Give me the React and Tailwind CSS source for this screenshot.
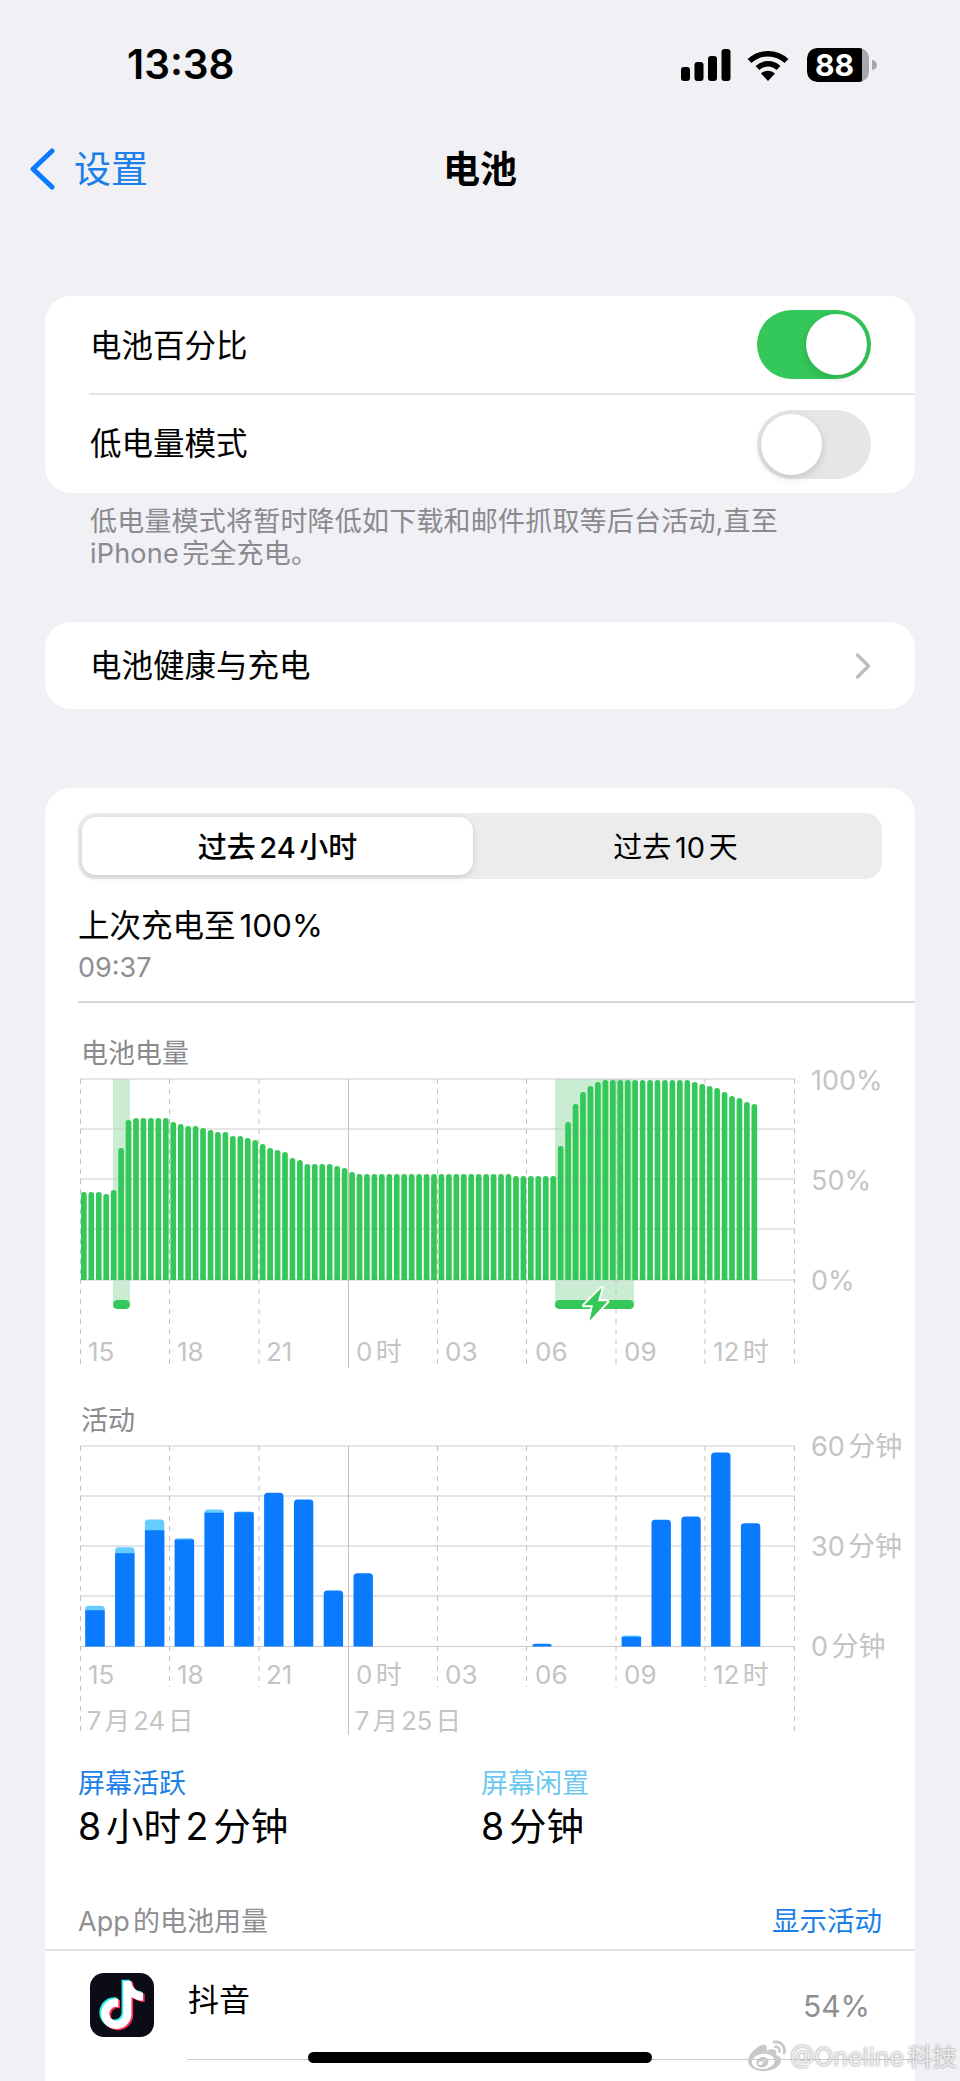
import { ChevronRight } from "lucide-react";
import { FaWeibo } from "react-icons/fa";

// hourly battery level, in px above the baseline (200px = 100%)
const batteryLevels = [
  88, 88, 88, 86, 90, 132, 160, 162, 162, 162, 162, 162, 158, 156, 154, 154, 152, 150, 148, 148,
  144, 144, 142, 140, 136, 132, 130, 128, 122, 120, 116, 116, 116, 116, 114, 112, 108, 106,
  ...Array(20).fill(106), ...Array(6).fill(104),
  134, 158, 176, 188, 194, 198, ...Array(12).fill(200),
  198, 196, 194, 192, 188, 184, 182, 178, 176,
];

// [slot, screen on, screen on + idle]
const activityBars = [
  [0, 36.3, 40.7], [1, 93.3, 99.3], [2, 116.3, 127], [3, 107, 108.3], [4, 133.7, 137],
  [5, 134.3, 135], [6, 153.7], [7, 147], [8, 56], [9, 73.3], [15, 2.7], [18, 9.7, 11],
  [19, 126.7], [20, 130], [21, 194], [22, 123.3],
];

const tiktokPath = "M448,209.91a210.06,210.06,0,0,1-122.77-39.25V349.38A162.55,162.55,0,1,1,185,188.31V278.2a74.62,74.62,0,1,0,52.23,71.18V0l88,0a121.18,121.18,0,0,0,1.86,22.17h0A122.18,122.18,0,0,0,381,102.39a121.43,121.43,0,0,0,67,20.14Z";

const hourTicks = [
  [8, "15"], [97, "18"], [186, "21"], [276, "0时"], [365, "03"], [455, "06"], [544, "09"], [633, "12时"],
];
const tickX = [0.5, 89.5, 179, 268.5, 357.5, 446.5, 536, 625, 714.5];

function topRounded(x, w, bottom, h, r) {
  const rr = Math.min(r, h);
  return `M${x} ${bottom}V${bottom - h + rr}A${rr} ${rr} 0 0 1 ${x + rr} ${bottom - h}H${x + w - rr}A${rr} ${rr} 0 0 1 ${x + w} ${bottom - h + rr}V${bottom}Z`;
}

function ChartGrid({ rows, dashEnd, solidEnd, edgeEnd = dashEnd }) {
  return (
    <g>
      {rows.map((y) => (
        <line key={y} x1="0" x2="715" y1={y} y2={y} stroke="#cbcbcd" strokeWidth="1.2" />
      ))}
      {tickX.map((x, i) => {
        const solid = i === 3;
        const edge = i === 0 || i === tickX.length - 1;
        return (
          <line key={x} x1={x} x2={x} y1="0" y2={solid ? solidEnd : edge ? edgeEnd : dashEnd}
            stroke="#c0c0c2" strokeWidth="1" strokeDasharray={solid ? undefined : "5 5"} />
        );
      })}
    </g>
  );
}

function BatteryChart() {
  return (
    <svg width="835" height="291" className="block overflow-visible ml-[35px] mt-[5px]">
      <rect x="33" y="0" width="17" height="229" fill="#c9ecd3" />
      <rect x="475" y="0" width="79" height="229" fill="#c9ecd3" />
      <ChartGrid rows={[0, 50, 100, 150, 201]} dashEnd={286} solidEnd={289} />
      {batteryLevels.map((h, i) => (
        <path key={i} d={topRounded(1 + 7.45 * i, 5.7, 201, h, 2.8)} fill="#34c759" />
      ))}
      <rect x="33" y="221" width="17" height="9" rx="4.5" fill="#34c759" />
      <rect x="475" y="221" width="79" height="9" rx="4.5" fill="#34c759" />
      <path d="M521.7 208.7L504 226.3H513L509.5 242L527.5 222.3H518Z" fill="#34c759" stroke="#fff"
        strokeWidth="4" strokeLinejoin="round" paintOrder="stroke" />
      {hourTicks.map(([x, label]) => (
        <text key={label} x={x} y="281.5" fill="#c4c4c6" className="text-[26px]">{label}</text>
      ))}
      <text x="731" y="10.5" fill="#c4c4c6" className="text-[27px]">100%</text>
      <text x="731" y="110.5" fill="#c4c4c6" className="text-[27px]">50%</text>
      <text x="731" y="210.5" fill="#c4c4c6" className="text-[27px]">0%</text>
    </svg>
  );
}

function ActivityChart() {
  return (
    <svg width="835" height="290" className="block overflow-visible ml-[35px] mt-[5px]">
      <ChartGrid rows={[0, 50, 100, 150, 200.5]} dashEnd={241} solidEnd={289} edgeEnd={285} />
      {activityBars.map(([slot, screen, total]) => {
        const x = 5.3 + 29.8 * slot;
        return (
          <g key={slot}>
            {total && <path d={topRounded(x, 19.4, 200.5, total, 3.5)} fill="#66ccff" />}
            <path d={topRounded(x, 19.4, 200.5, screen, total ? 0.5 : 3.5)} fill="#0a7aff" />
          </g>
        );
      })}
      {hourTicks.map(([x, label]) => (
        <text key={label} x={x} y="238" fill="#c4c4c6" className="text-[26px]">{label}</text>
      ))}
      <text x="7" y="284" fill="#c4c4c6" className="text-[25.5px]">7月24日</text>
      <text x="275" y="284" fill="#c4c4c6" className="text-[25.5px]">7月25日</text>
      <text x="731" y="10" fill="#c4c4c6" className="text-[27px]">60分钟</text>
      <text x="731" y="110" fill="#c4c4c6" className="text-[27px]">30分钟</text>
      <text x="731" y="210" fill="#c4c4c6" className="text-[27px]">0分钟</text>
    </svg>
  );
}

function Toggle({ on }) {
  return (
    <div className={`w-[114px] h-[69px] rounded-full p-[4px] flex ${on ? "bg-[#34c759] justify-end" : "bg-[#e6e6e8] justify-start"}`}>
      <div className="w-[61px] h-[61px] rounded-full bg-white shadow-[0_3px_8px_rgba(0,0,0,0.15)]" />
    </div>
  );
}

function StatusBar() {
  return (
    <div className="h-[130px] flex items-center justify-between pl-[127px] pr-[83px]">
      <span className="text-[40.5px] font-semibold text-black leading-none">13:38</span>
      <div className="flex items-center">
        <svg width="50" height="32" viewBox="0 0 50 32" className="block">
          <rect x="0" y="18" width="9" height="14" rx="3" fill="#000" />
          <rect x="13.5" y="13" width="9" height="19" rx="3" fill="#000" />
          <rect x="27" y="7" width="9" height="25" rx="3" fill="#000" />
          <rect x="40.5" y="0" width="9" height="32" rx="3" fill="#000" />
        </svg>
        <svg width="42" height="32" viewBox="0 0 42 32" className="block ml-[16px]">
          <path d="M2.5 12A27 27 0 0 1 39.5 12" stroke="#000" strokeWidth="5.5" fill="none" />
          <path d="M10.5 19A15 15 0 0 1 31.5 19" stroke="#000" strokeWidth="5.5" fill="none" />
          <path d="M21 32L14 24.5A10 10 0 0 1 28 24.5Z" fill="#000" />
        </svg>
        <div className="flex items-center ml-[18px]">
          <div className="w-[62px] h-[34px] rounded-[10px] overflow-hidden bg-[#a8a8aa]">
            <div className="w-[55px] h-full bg-black rounded-l-[10px] flex items-center justify-center text-white text-[30px] font-bold leading-none">88</div>
          </div>
          <div className="w-[5px] h-[10px] ml-[3px] rounded-r-full bg-[#a8a8aa]" />
        </div>
      </div>
    </div>
  );
}

export default function App() {
  return (
    <div className="relative w-[960px] h-[2081px] overflow-hidden bg-[#f0f0f5] text-black font-['Inter','Noto_Sans_CJK_SC',sans-serif] [text-autospace:normal]">
      <StatusBar />

      {/* nav */}
      <div className="h-[78px] grid grid-cols-[1fr_auto_1fr] items-center">
        <div className="flex items-center pl-[29px] text-[#1a7fe8]">
          <svg width="26" height="42" viewBox="0 0 26 42" className="block">
            <path d="M23 3L4 21L23 39" stroke="#0a7aff" strokeWidth="5" fill="none" strokeLinecap="round" strokeLinejoin="round" />
          </svg>
          <span className="ml-[19px] text-[37px] leading-none">设置</span>
        </div>
        <span className="text-[37px] font-semibold leading-none">电池</span>
        <div />
      </div>

      {/* toggles */}
      <div className="mt-[88px] mx-[45px] h-[197px] bg-white rounded-[26px] overflow-hidden">
        <div className="h-[97px] flex items-center justify-between pl-[45px] pr-[44px]">
          <span className="text-[31.5px] leading-none pt-[2px]">电池百分比</span>
          <Toggle on />
        </div>
        <div className="ml-[44px] h-[2px] bg-[#e4e4e6]" />
        <div className="h-[98px] flex items-center justify-between pl-[45px] pr-[44px]">
          <span className="text-[31.5px] leading-none">低电量模式</span>
          <Toggle />
        </div>
      </div>
      <p className="mt-[13px] ml-[90px] w-[730px] text-[27px] leading-[32px] tracking-[0.2px] text-[#8a8a8e]">
        低电量模式将暂时降低如下载和邮件抓取等后台活动,直至 iPhone完全充电。
      </p>

      <div className="mt-[52px] mx-[45px] h-[87px] bg-white rounded-[26px] flex items-center justify-between pl-[45px] pr-[30px]">
        <span className="text-[31.5px] leading-none">电池健康与充电</span>
        <ChevronRight size={44} strokeWidth={1.8} className="text-[#bcbcc0]" />
      </div>

      {/* usage */}
      <div className="mt-[79px] mx-[45px] bg-white rounded-t-[26px] pt-[25px] h-[1400px]">
        <div className="mx-[33px] h-[66px] rounded-[17px] bg-[#ececed] p-[4px] flex">
          <div className="w-[391px] h-[58px] rounded-[14px] bg-white shadow-[0_2px_6px_rgba(0,0,0,0.14)] flex items-center justify-center text-[29px] font-medium leading-none pt-[2px]">过去24小时</div>
          <div className="flex-1 flex items-center justify-center text-[29px] leading-none pt-[2px]">过去10天</div>
        </div>
        <div className="ml-[33px] mt-[29px] text-[31.5px] leading-[36px]">上次充电至100%</div>
        <div className="ml-[33px] mt-[8px] text-[27px] leading-[32px] text-[#8e8e93]">09:37</div>
        <div className="ml-[33px] mt-[17px] h-[1.5px] bg-[#d8d8da]" />

        <div className="ml-[36px] mt-[31px] h-[40px] flex items-center text-[27px] leading-none text-[#8a8a8e]">电池电量</div>
        <BatteryChart />
        <div className="ml-[36px] mt-[31px] h-[40px] flex items-center text-[27px] leading-none text-[#8a8a8e]">活动</div>
        <ActivityChart />

        <div className="mt-[30px] ml-[33px] flex">
          <div className="w-[403px]">
            <div className="h-[36px] flex items-center text-[27px] leading-none text-[#1a7fe8]">屏幕活跃</div>
            <div className="mt-[2px] h-[46px] flex items-center text-[37.5px] leading-none">8小时2分钟</div>
          </div>
          <div>
            <div className="h-[36px] flex items-center text-[27px] leading-none text-[#6dc8f0]">屏幕闲置</div>
            <div className="mt-[2px] h-[46px] flex items-center text-[37.5px] leading-none">8分钟</div>
          </div>
        </div>

        <div className="mt-[54px] pl-[33px] pr-[33px] h-[36px] flex items-center justify-between text-[27px] leading-none">
          <span className="text-[#8e8e93]">App的电池用量</span>
          <span className="text-[27.5px] text-[#1a7fe8]">显示活动</span>
        </div>
        <div className="mt-[9px] h-[2px] bg-[#e2e2e4]" />

        <div className="flex ml-[45px] mt-[22px]">
          <div className="w-[64px] h-[64px] rounded-[14px] bg-[#0b0c16] flex items-center justify-center shrink-0">
            <svg width="42" height="48" viewBox="0 0 448 512" className="block overflow-visible">
              <path d={tiktokPath} fill="#25f4ee" transform="translate(-18 -14)" />
              <path d={tiktokPath} fill="#fe2c55" transform="translate(18 14)" />
              <path d={tiktokPath} fill="#fff" />
            </svg>
          </div>
          <div className="ml-[34px] flex-1 pr-[45px] flex justify-between">
            <span className="text-[31px] leading-none mt-[11px]">抖音</span>
            <span className="text-[30px] leading-none text-[#8e8e93] mt-[18px]">54%</span>
          </div>
        </div>
        <div className="ml-[142px] mt-[22px] h-[1.5px] bg-[#ccccce]" />
      </div>

      {/* home indicator and repost watermark sit over the page */}
      <div className="absolute left-[308px] top-[2052px] w-[344px] h-[11px] rounded-full bg-black" />
      <div className="absolute left-[748px] top-[2038px] flex items-center text-white/80 whitespace-nowrap">
        <FaWeibo size={38} className="text-[#c8c8c8]" />
        <span className="ml-[4px] text-[25px] leading-none [text-shadow:0_0_2px_rgba(0,0,0,0.55)]">@Oneline科技</span>
      </div>
    </div>
  );
}
